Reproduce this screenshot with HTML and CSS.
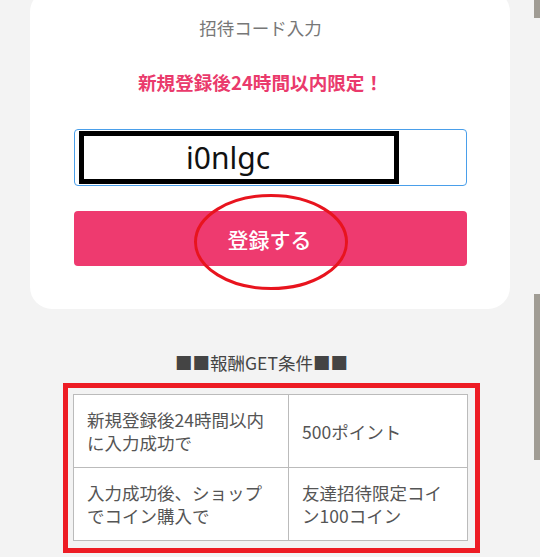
FILE: index.html
```html
<!DOCTYPE html>
<html lang="ja">
<head>
<meta charset="utf-8">
<title>招待コード入力</title>
<link rel="stylesheet" href="styles.css">
</head>
<body>
<main class="page">
  <section class="card">
    <h2 class="card-title">招待コード入力</h2>
    <p class="limit">新規登録後24時間以内限定！</p>
    <div class="code-field">
      <input class="code-input" type="text" value="i0nlgc">
      <span class="mark-box"></span>
    </div>
    <div class="submit-wrap">
      <button class="submit" type="button">登録する</button>
      <svg class="mark-ellipse" width="156" height="98" viewBox="0 0 156 98"><ellipse cx="78" cy="49" rx="75.5" ry="46.5" fill="none" stroke="#e8141e" stroke-width="3"/></svg>
    </div>
  </section>
  <h3 class="cond-title">■■報酬GET条件■■</h3>
  <div class="cond-frame">
    <table class="cond-table">
      <colgroup><col class="c1"><col class="c2"></colgroup>
      <tr><td>新規登録後24時間以内に入力成功で</td><td>500ポイント</td></tr>
      <tr><td>入力成功後、ショップでコイン購入で</td><td>友達招待限定コイン100コイン</td></tr>
    </table>
  </div>
</main>
<div class="scrollbar"><div class="thumb thumb-top"></div><div class="thumb thumb-main"></div></div>
</body>
</html>
```
FILE: styles.css
```css
html, body {
  margin: 0;
  padding: 0;
  background: #f3f3f3;
  height: 557px;
  overflow: hidden;
}
body {
  font-family: "Noto Sans CJK JP", "Noto Sans", sans-serif;
  position: relative;
}
.page {
  display: flex;
  flex-direction: column;
  align-items: flex-start;
}
.card {
  box-sizing: border-box;
  width: 480px;
  margin: -10px 0 0 30px;
  padding: 26px 43px 43px 44px;
  background: #fff;
  border-radius: 22px;
  display: flex;
  flex-direction: column;
}
.card-title {
  margin: 0;
  padding-right: 20px;
  font-size: 17.5px;
  line-height: 24px;
  font-weight: 400;
  color: #777;
  text-align: center;
}
.limit {
  margin: 29px 0 0;
  padding-right: 20px;
  font-size: 18.6px;
  line-height: 26px;
  font-weight: 700;
  color: #ea3a6c;
  text-align: center;
}
.code-field {
  position: relative;
  margin-top: 34px;
  height: 57px;
}
.code-input {
  box-sizing: border-box;
  width: 100%;
  height: 57px;
  margin: 0;
  border: 1px solid #4a9fea;
  border-radius: 4px;
  padding: 0 0 0 111px;
  font-family: "Noto Sans", "DejaVu Sans", sans-serif;
  font-size: 30px;
  font-weight: 400;
  color: #111;
  background: #fff;
  outline: none;
}
.mark-box {
  position: absolute;
  left: 5px;
  top: 2px;
  width: 320px;
  height: 53px;
  box-sizing: border-box;
  border: 5px solid #000;
}
.submit-wrap {
  position: relative;
  margin-top: 25px;
}
.submit {
  display: block;
  width: 100%;
  height: 55px;
  border: 0;
  border-radius: 4px;
  background: #ee3a6f;
  color: #fff;
  font-family: "Noto Sans CJK JP", sans-serif;
  font-size: 21px;
  font-weight: 500;
  padding: 0 2px 0 0;
}
.mark-ellipse {
  position: absolute;
  left: 119px;
  top: -18px;
}
.cond-title {
  align-self: stretch;
  margin: 42px 0 0;
  padding-right: 17px;
  font-size: 17.5px;
  line-height: 24px;
  font-weight: 400;
  color: #444;
  text-align: center;
}
.cond-frame {
  margin: 8px 0 0 63px;
  width: 417px;
  box-sizing: border-box;
  border: 5px solid #ed1c24;
  padding: 6px 8px 7px 5px;
}
.cond-table {
  width: 394px;
  border-collapse: collapse;
  table-layout: fixed;
  background: #fff;
}
.cond-table .c1 { width: 215px; }
.cond-table .c2 { width: 179px; }
.cond-table td {
  border: 1px solid #bbb;
  padding: 13px 12px 13px 13px;
  font-size: 17.5px;
  line-height: 23px;
  color: #555;
  vertical-align: middle;
}
.scrollbar {
  position: absolute;
  top: 0;
  right: 0;
  width: 6px;
  height: 557px;
}
.thumb {
  position: absolute;
  left: 0;
  width: 6px;
  background: #a09c94;
}
.thumb-top { top: 0; height: 18px; }
.thumb-main { top: 294px; height: 166px; }
```
